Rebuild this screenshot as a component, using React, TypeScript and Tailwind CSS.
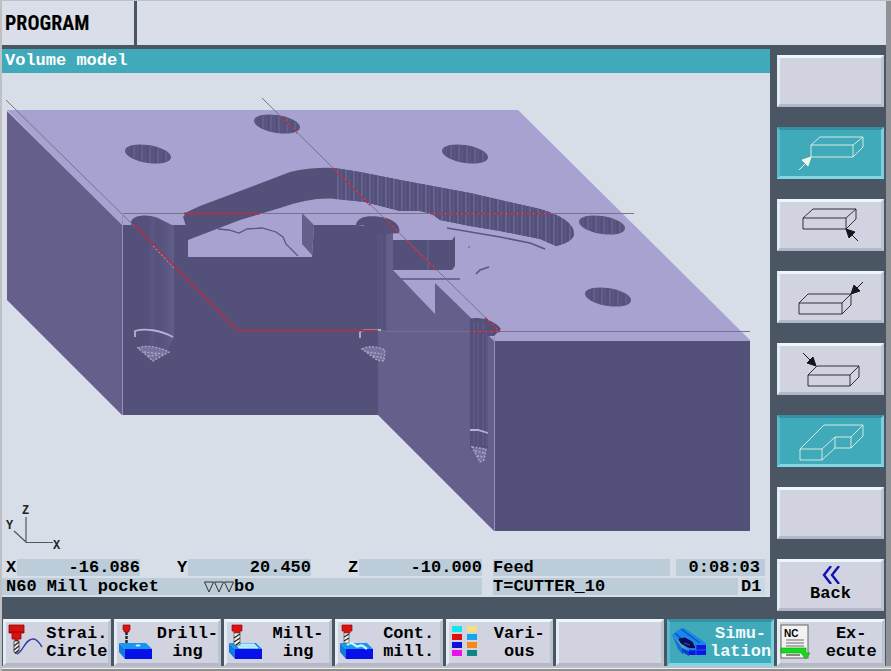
import type { ReactNode } from "react";
import clsx from "clsx";

const mono = "font-['Liberation_Mono','DejaVu_Sans_Mono',monospace] font-bold text-[17px]";

function KeyButton({
  label,
  active = false,
  className,
  children,
}: {
  label?: string;
  active?: boolean;
  className?: string;
  children?: ReactNode;
}) {
  return (
    <button
      type="button"
      aria-label={label}
      aria-pressed={active}
      className={clsx(
        "flex items-center border-[3px]",
        active
          ? "border-t-[#3590a4] border-r-[#7ccfdf] border-b-[#7fd8e6] border-l-[#58b9cb] bg-[#40a9ba] text-[#f2fbfd]"
          : "border-t-[#ecf7fc] border-r-[#bcc3d0] border-b-[#b3b8c8] border-l-[#e4ecf4] bg-[#d1d4e0] text-black",
        className,
      )}
    >
      {children}
    </button>
  );
}

type View = { name: string; active?: boolean; lines?: string; arrow?: string; head?: string };

const views: View[] = [
  { name: "" },
  {
    name: "View from front left",
    active: true,
    lines: "M30 14H72V26H30ZM30 14L39 6H82L72 14M82 6V16L72 26",
    arrow: "M18 39L26 31",
    head: "M30 26L27 35L21 29Z",
  },
  {
    name: "View from front right",
    lines: "M22 15H65V26H22ZM22 15L32 6H75L65 15M75 6V16L65 26",
    arrow: "M77 38L69 30",
    head: "M65 26L74 29L68 35Z",
  },
  {
    name: "View from rear right",
    lines: "M18 28H61V39H18ZM18 28L27 19H70L61 28M70 19V30L61 39",
    arrow: "M82 7L74 15",
    head: "M70 19L73 10L79 16Z",
  },
  {
    name: "View from rear left",
    lines: "M27 28H69V39H27ZM27 28L36 19H78L69 28M78 19V30L69 39",
    arrow: "M22 6L30 14",
    head: "M35 19L26 16L32 10Z",
  },
  {
    name: "Cutaway view",
    active: true,
    lines: "M19 30H41V41H19ZM19 30L43 6H82L70 18H54L41 30M54 18V29H70V18M82 6V17L70 29M54 29L41 41",
  },
  { name: "" },
];

function ViewIcon({ view }: { view: View }) {
  const tone = view.active ? "#eef6e4" : "#15151b";
  return (
    <svg viewBox="-1 -1 101 46" className="h-[46px] w-full" fill="none" stroke={tone} strokeWidth="1">
      <path d={view.lines} strokeOpacity=".85" />
      {view.arrow && <path d={view.arrow} />}
      {view.head && <path d={view.head} fill={tone} />}
    </svg>
  );
}

function Block() {
  return (
    <g>
      <path d="M2 22L8 28V38L2 31Z" fill="#127ad8" />
      <path d="M2 22H29L35 28H8Z" fill="#1496f2" />
      <rect x="8" y="28" width="27" height="10" fill="#0710e8" />
    </g>
  );
}

const icons: Record<string, ReactNode> = {
  line: (
    <>
      <path d="M3 4H18V12H15V18H12V20H9V18H6V12H3Z" fill="#d91111" stroke="#8c0808" strokeWidth=".8" />
      <path d="M3 11H18" stroke="#8c0808" />
      <path d="M8 20H13V29L10 33L8 31Z" fill="#eee" stroke="#333" strokeWidth=".8" />
      <path d="M13 21L8 25M13 25L8 29M13 29L9 32" stroke="#222" strokeWidth="1.2" />
      <path d="M11 33C17 31 19 18 27 18C32 18 33 22 36 26" fill="none" stroke="#3a3aa8" strokeWidth="1.4" />
    </>
  ),
  drill: (
    <>
      <Block />
      <ellipse cx="21" cy="24.500" rx="2.500" ry="1" fill="#e8f8ff" />
      <path d="M6 4H13V9H12V11H7V9H6Z" fill="#e01010" stroke="#8c0808" strokeWidth=".7" />
      <path d="M9.500 11V23" stroke="#222" strokeWidth="2.400" strokeDasharray="3 1" />
    </>
  ),
  mill: (
    <>
      <Block />
      <path d="M9 23H27L31 27H12Z" fill="#a8e8fa" stroke="#e9fbff" strokeWidth=".8" />
      <path d="M5 4H15V10H13V12H7V10H5Z" fill="#e01010" stroke="#8c0808" strokeWidth=".7" />
      <rect x="7" y="12" width="6" height="12" fill="#f0f0f0" stroke="#555" strokeWidth=".7" />
      <path d="M13 13L7 17M13 17L7 21M13 21L9 24" stroke="#222" strokeWidth="1.3" />
    </>
  ),
  contour: (
    <>
      <Block />
      <path d="M9 24C13 20 15 23 18 25C21 27 21 23 25 25L29 28" fill="none" stroke="#c8f4ff" strokeWidth="2.400" />
      <path d="M4 4H14V10H12V12H6V10H4Z" fill="#e01010" stroke="#8c0808" strokeWidth=".7" />
      <rect x="6" y="12" width="5" height="10" fill="#f0f0f0" stroke="#555" strokeWidth=".7" />
      <path d="M11 13L6 16M11 17L6 20" stroke="#222" strokeWidth="1.3" />
    </>
  ),
  various: (
    <>
      <rect x="3" y="5" width="10" height="6" fill="#10e8ee" />
      <rect x="18" y="5" width="10" height="6" fill="#f4e07e" />
      <rect x="3" y="13" width="10" height="6" fill="#dc1212" />
      <rect x="18" y="13" width="10" height="6" fill="#18a4ea" />
      <rect x="3" y="21" width="10" height="6" fill="#1010d8" />
      <rect x="18" y="21" width="10" height="6" fill="#f58a10" />
      <rect x="3" y="29" width="10" height="6" fill="#e812e8" />
      <rect x="18" y="29" width="10" height="6" fill="#0e8585" />
    </>
  ),
  simulation: (
    <>
      <path d="M2 14L8 9L14 7L36 22V24H26L20 30Z" fill="#1a86ea" />
      <path d="M2 14L13 28V34L8 28Z" fill="#1570dc" />
      <path d="M5 12L22 27M11 8L30 22" stroke="#0b55c8" strokeWidth="1.400" />
      <path d="M9 18L15 17L22 21L25 27L18 26L11 22Z" fill="#0a0a60" stroke="#060640" />
      <path d="M14 22L20 24" stroke="#4a4ab8" />
      <path d="M12 27L19 30V35L12 31Z" fill="#0d3fd8" />
      <path d="M19 29H26V24H36V34H19Z" fill="#0a18e0" />
      <path d="M19 29H36M26 24V34" stroke="#1d5cf0" />
    </>
  ),
  nc: (
    <>
      <rect x="1" y="4" width="27" height="33" fill="#f2f2f2" stroke="#666" strokeWidth="1" />
      <path d="M6 19H24M6 22H24M6 25H24" stroke="#999" strokeWidth="1.500" />
      <path d="M6 34H20" stroke="#888" strokeWidth="2" />
      <path d="M1 27H26V32H30L25.500 38L21 32H1Z" fill="#14dc1c" stroke="#0a980f" strokeWidth=".6" />
      <text x="4" y="16" fontSize="10" fontWeight="700" fontFamily="Liberation Sans, Arial, sans-serif">
        NC
      </text>
    </>
  ),
};

const softkeys = [
  { icon: "line", text: ["Strai.", "Circle"] },
  { icon: "drill", text: ["Drill-", "ing"] },
  { icon: "mill", text: ["Mill-", "ing"] },
  { icon: "contour", text: ["Cont.", "mill."] },
  { icon: "various", text: ["Vari-", "ous"] },
  { icon: "", text: [] },
  { icon: "simulation", text: ["Simu-", "lation"], active: true },
  { icon: "nc", text: ["Ex-", "ecute"] },
];

const holes = [
  [148, 154],
  [277, 124],
  [465, 154],
  [602, 225],
  [608, 297],
];

function VolumeModel() {
  return (
    <svg viewBox="2 73 768 484" className="w-full" role="img" aria-label="Volume model of the workpiece">
      <defs>
        <pattern id="ribs" width="8" height="10" patternUnits="userSpaceOnUse">
          <rect width="8" height="10" fill="#53507a" />
          <rect x="1" width="2" height="10" fill="#656190" />
          <rect x="5" width="1" height="10" fill="#605c88" />
        </pattern>
        <linearGradient id="bore" x1="0" x2="1">
          <stop offset="0" stopColor="#53507a" />
          <stop offset=".4" stopColor="#53507a" />
          <stop offset=".5" stopColor="#5b5783" />
          <stop offset=".6" stopColor="#55527c" />
          <stop offset=".8" stopColor="#5a5682" />
          <stop offset="1" stopColor="#625e8a" />
        </linearGradient>
      </defs>
      <path d="M7 110H518L750 340V343H494L378 300V260H122V226Z" fill="#a7a2d0" />
      <path d="M7 111L122 225V415L7 300Z" fill="#645f8b" />
      <path d="M122 225H188V257H312L314 225H357L386 228L393 270V330L378 415H122Z" fill="#53507a" />
      <path d="M302 213L314 225L312 255L302 244Z" fill="#645f8b" />
      <path d="M302 245L312 256H302Z" fill="#a7a2d0" />
      <path d="M386 228H393V270L435 314V283L470 317L494 341V531L378 415V240Z" fill="#645f8b" />
      <rect x="494" y="341" width="256" height="190" fill="#53507a" />

      <path
        d="M183 217L187 212L200 206L240 191L290 172Q312 167 335 168L360 172L400 180L470 193L540 209Q574 219 574 234Q573 242 556 246L540 239L500 231L470 226L440 220L432 214L420 211H400L365 202L340 199Q312 196 280 208L240 220L188 240L186 226Z"
        fill="#53507a"
      />
      <path
        d="M334 168L360 172L400 180L470 193L540 209Q574 219 574 234Q573 242 556 246L540 239L500 231L470 226L440 220L432 214L420 211H400L365 202L334 199Z"
        fill="url(#ribs)"
      />
      <path d="M218 229L229 230L239 233L247 229L262 228L276 232L283 237L286 244L298 256" fill="none" stroke="#5a5684" strokeWidth="1.300" />
      <path d="M393 240H452L455 236V266L452 270H393Z" fill="#53507a" />
      <path d="M428 240V270" stroke="#6a6692" />
      <path d="M401 279H460M447 228L500 237L530 243L545 249M476 274L480 270L489 267" fill="none" stroke="#5a5684" strokeWidth="1.600" />
      <circle cx="469" cy="247" r="1" fill="#77739f" />

      {holes.map(([x, y]) => (
        <g key={x} transform={`translate(${x} ${y}) skewY(8)`}>
          <ellipse rx="22.500" ry="8.500" fill="url(#ribs)" stroke="#59557f" />
        </g>
      ))}

      <path d="M131 222C133 214 151 214 160 219L174 226V337L166 352H138L131 337Z" fill="url(#bore)" />
      <path d="M356 225C357 215 373 215 386 218C396 221 401 227 399 233L386 234V330H364V225Z" fill="#53507a" />
      <path d="M379 234V330M382 234V330M387 234V330" stroke="#5f5b87" strokeWidth="1" />
      <path d="M470 319C478 316 495 320 501 329L494 336H488V450H470Z" fill="#53507a" />
      <path d="M474 322V446M478 322V450M483 322V446M487 334V446" stroke="#625e8a" strokeWidth="1.200" />

      <g fill="none" stroke="#b5b1d4" strokeWidth="1.800">
        <path d="M135 337V331C145 328 160 330 173 337" />
        <path d="M360 338V332L364 330H381" />
        <path d="M470 430H478L488 433" />
      </g>
      <g fill="#77739c" stroke="#aaa6c8" strokeWidth="1.400" strokeDasharray="2 1.500">
        <path d="M138 348C148 344 160 348 169 352L153 361Z" />
        <path d="M144 352L163 354M148 356L158 355" />
        <path d="M362 349C369 345 378 347 385 350L384 361L377 360Z" />
        <path d="M367 352L382 354M373 356L384 358" />
        <path d="M472 447L486 449L484 460L480 462Z" />
        <path d="M475 451L485 453M477 456L484 457" />
      </g>

      <g fill="none" stroke="#77738e" strokeWidth="1">
        <path d="M6 100L134 226M122 213.500H634M262 98L500 332M386 331.500H750" />
      </g>
      <path d="M122.500 213V415M494.500 337V531" stroke="#9691b8" strokeWidth="1" />
      <g fill="none" stroke="#9c3852" strokeWidth="2">
        <path d="M184 213.500H260M134 225L237 330.500H378" />
        <path
          d="M281 117L297 133M334 169L370 205M385 219L398 233M406 241L436 270M485 318L500 332M430 213.500H550M470 331.500H498"
          strokeDasharray="4 1.500"
        />
      </g>
      <path d="M153 246L174 268" stroke="#c2a7c3" strokeWidth="1" strokeDasharray="2 2" />

      <path d="M26 517V542.500H53M26 542L14 531" fill="none" stroke="#55555f" strokeWidth="1.200" />
      <g fontFamily="Liberation Mono, monospace" fontSize="12" fontWeight="700" fill="#222">
        <text x="22" y="514">Z</text>
        <text x="6" y="529">Y</text>
        <text x="53" y="549">X</text>
      </g>
    </svg>
  );
}

function Axis({ name, value, className }: { name: string; value: string; className?: string }) {
  return (
    <div className={clsx("flex", className)}>
      <span className="w-[11px]">{name}</span>
      <output aria-label={`${name} position`} className="flex-1 bg-[#bccdd9] text-right">
        {value}
      </output>
    </div>
  );
}

export default function App() {
  return (
    <div className="flex min-h-screen flex-col border-t border-l-2 border-[#bfc0c3] bg-[#d8dee7]">
      <div className="flex flex-1 flex-col border-r-[5px] border-r-[#919295] bg-[#4a5663]">
        <header className="flex h-[44px] bg-[#dadee8]">
          <h1 className="flex w-[135px] items-center border-r-[3px] border-[#4a5663] pl-[3px] font-['Liberation_Sans_Narrow','Roboto_Condensed','Liberation_Mono',monospace] text-[20px] leading-[24px] font-bold text-black">
            PROGRAM
          </h1>
        </header>
        <div className="flex flex-1 pt-[4px]">
          <main className="mb-[22px] flex min-w-0 flex-1 flex-col bg-[#d8dee7]">
            <h2 className={clsx(mono, "h-[24px] bg-[#40a9ba] pl-[3px] leading-[24px] text-white")}>Volume model</h2>
            <VolumeModel />
            <section
              aria-label="Machine status"
              className={clsx(mono, "mt-auto flex flex-col gap-[2px] pr-[5px] pb-[2px] leading-[17px] text-black")}
            >
              <div className="grid grid-cols-[171fr_171fr_145fr_183fr_89fr] pl-[4px]">
                <Axis name="X" value="-16.086" className="pr-[37px]" />
                <Axis name="Y" value="20.450" className="pr-[37px]" />
                <Axis name="Z" value="-10.000" className="pr-[11px]" />
                <div className="mr-[6px] bg-[#bccdd9]">Feed</div>
                <div className="bg-[#bccdd9] pr-[5px] text-right">0:08:03</div>
              </div>
              <div className="grid grid-cols-[491fr_248fr_24fr]">
                <div className="mr-[11px] flex items-center bg-[#bccdd9] pl-[4px]">
                  <span className="w-[198px]">N60 Mill pocket</span>
                  <svg viewBox="0 0 30 12" className="h-[12px] w-[30px]" fill="none" stroke="#333" aria-label="Finishing">
                    <path d="M.5 1H9.500L5 11ZM10.500 1H19.500L15 11ZM20.500 1H29.500L25 11Z" />
                  </svg>
                  <span>bo</span>
                </div>
                <div className="mr-[3px] bg-[#bccdd9]">T=CUTTER_10</div>
                <div className="bg-[#cbd8e2]">D1</div>
              </div>
            </section>
          </main>
          <nav aria-label="View keys" className="flex w-[116px] flex-col gap-5 px-[2px] pt-[6px] pl-[7px]">
            {views.map((view, i) => (
              <KeyButton key={i} label={view.name || `Unassigned key ${i + 1}`} active={view.active} className="h-[52px]">
                {view.lines && <ViewIcon view={view} />}
              </KeyButton>
            ))}
            <KeyButton className={clsx(mono, "h-[52px] flex-col justify-center leading-[20px]")}>
              <svg viewBox="0 0 18 18" className="h-[18px] w-[18px]" fill="none" stroke="#1212b4" strokeWidth="2.400" aria-hidden="true">
                <path d="M9 0L2 9L9 18M17 0L10 9L17 18" />
              </svg>
              Back
            </KeyButton>
          </nav>
        </div>
        <nav aria-label="Softkeys" className="grid grid-cols-8 gap-[3px] px-[1px]">
          {softkeys.map((key, i) => (
            <KeyButton
              key={i}
              label={key.text.length ? undefined : "Unassigned softkey"}
              active={key.active}
              className={clsx(mono, "h-[47px] min-w-0 leading-[18px]")}
            >
              {key.icon && (
                <svg viewBox="0 0 40 40" className="mb-1 h-[40px] w-[40px] shrink-0" aria-hidden="true">
                  {icons[key.icon]}
                </svg>
              )}
              <span className="flex flex-1 flex-col items-center whitespace-nowrap">
                {key.text.map((line) => (
                  <span key={line}>{line}</span>
                ))}
              </span>
            </KeyButton>
          ))}
        </nav>
      </div>
      <div className="h-[5px] border-y-2 border-t-[#bfc0c3] border-b-[#8c8d90] bg-[#f0f0f0]" />
    </div>
  );
}
